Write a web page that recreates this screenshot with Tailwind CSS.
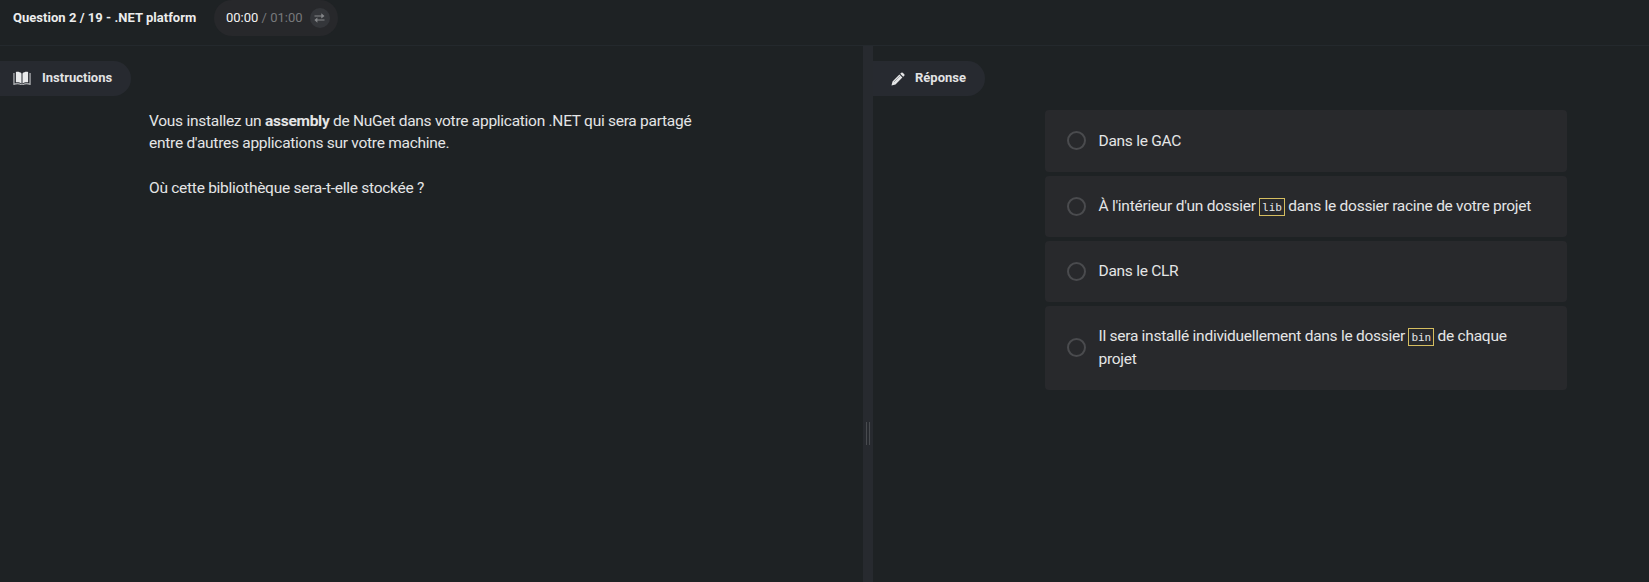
<!DOCTYPE html>
<html lang="fr">
<head>
<meta charset="utf-8">
<title>Question 2 / 19 - .NET platform</title>
<script src="https://cdn.jsdelivr.net/npm/@tailwindcss/browser@4"></script>
</head>
<body class="h-screen overflow-hidden bg-[#1e2224] font-[Roboto,sans-serif] text-[#e4e5e6]">
<div class="flex h-full flex-col">
  <header class="flex h-[46px] shrink-0 items-start border-b border-[#24292d] pl-[13px]">
    <h1 class="w-[201px] pt-[8px] text-[13px] leading-5 font-bold tracking-[0.03px] whitespace-nowrap text-[#eceded]">Question 2 / 19 - .NET platform</h1>
    <div class="flex h-9 w-[124px] items-center rounded-full bg-[#27282b] pl-3 text-[13px] whitespace-nowrap">
      <span class="text-[#f2f2f2]">00:00</span><span class="text-[#77797b]">&nbsp;/ 01:00</span>
      <span class="ml-[7px] flex size-5 items-center justify-center rounded-full bg-[#34363a]">
        <svg class="h-[10px] w-[11px]" viewBox="0 0 11 10" fill="none" stroke="#85878a" stroke-width="1.1"><path d="M0.5 3H9M2 7H10.5"/><path d="M7.3 0.3L10.5 3L7.3 5.4ZM3.4 4.6L0.4 7L3.4 9.7Z" fill="#85878a" stroke="none"/></svg>
      </span>
    </div>
  </header>
  <main class="flex min-h-0 flex-1">
    <section class="w-[863px] pt-[15px]">
      <div class="flex h-[35px] w-[131px] items-center rounded-r-full bg-[#272a30] pl-[13px]">
        <svg class="h-[15px] w-[18px]" viewBox="0 0 18 15"><path d="M8.5 2.4C7 1 5 .6 2.9 1V11.3C5 11 7 11.4 8.5 12.7ZM9.5 2.4C11 1 13 .6 15.1 1V11.3C13 11 11 11.4 9.5 12.7Z" fill="#e9eaeb"/><path d="M1.5 2H.4V14C3.6 12.9 6 13 8 14H10C12 13 14.4 12.9 17.6 14V2H16.5V12.4C13.6 11.9 11 12.2 9 13.5C7 12.2 4.4 11.9 1.5 12.4Z" fill="#c3c5c7"/></svg>
        <h2 class="ml-[11px] pb-[2px] text-[13px] font-bold text-[#e2e3e4]">Instructions</h2>
      </div>
      <div class="mt-[14px] ml-[149px] w-[565px] text-[15.5px] leading-[22.4px] tracking-[-0.27px]">
        <p>Vous installez un <strong>assembly</strong> de NuGet dans votre application .NET qui sera partagé entre d'autres applications sur votre machine.</p>
        <p class="mt-[22.4px]">Où cette bibliothèque sera-t-elle stockée ?</p>
      </div>
    </section>
    <div class="flex w-[10px] shrink-0 justify-center bg-[#272a2f] pt-[376px]">
      <div class="h-[23px] w-1 border-x border-[#484b4f]"></div>
    </div>
    <section class="flex-1 pt-[15px]">
      <div class="flex h-[35px] w-[112px] items-center rounded-r-full bg-[#272a30] pl-[18px]">
        <svg class="size-[14px]" viewBox="0 0 14 14" fill="#e4e5e6"><path d="M.5 13.5L1.5 9.5L8.4 2.6L11.4 5.6L4.5 12.5ZM9.2 1.8L10.3 .7Q11 .1 11.7 .7L13.3 2.3Q13.9 3 13.3 3.7L12.2 4.8Z"/><path d="M3 10L9 4" stroke="#777a80" stroke-width=".6"/></svg>
        <h2 class="ml-[10px] pb-[2px] text-[13px] font-bold text-[#e2e3e4]">Réponse</h2>
      </div>
      <ul class="mt-[14.4px] ml-[172px] flex w-[522px] flex-col gap-1 text-[15.5px] leading-[22.4px] tracking-[-0.27px]">
        <li class="flex items-center rounded bg-[#28292c] px-[21.5px] py-[19.4px]"><span class="mr-[13px] size-[19px] shrink-0 rounded-full border-2 border-[#4a4b4e]"></span><p>Dans le GAC</p></li>
        <li class="flex items-center rounded bg-[#28292c] px-[21.5px] py-[19.4px]"><span class="mr-[13px] size-[19px] shrink-0 rounded-full border-2 border-[#4a4b4e]"></span><p class="whitespace-nowrap">À l'intérieur d'un dossier <code class="border border-[#d5bd60] px-[2px] pt-[2px] pb-px font-['DejaVu_Sans_Mono',monospace] text-[11px] leading-none tracking-[-0.1px]">lib</code> dans le dossier racine de votre projet</p></li>
        <li class="flex items-center rounded bg-[#28292c] px-[21.5px] py-[19.4px]"><span class="mr-[13px] size-[19px] shrink-0 rounded-full border-2 border-[#4a4b4e]"></span><p>Dans le CLR</p></li>
        <li class="flex items-center rounded bg-[#28292c] px-[21.5px] py-[19.4px]"><span class="mr-[13px] size-[19px] shrink-0 rounded-full border-2 border-[#4a4b4e]"></span><p>Il sera installé individuellement dans le dossier <code class="border border-[#d5bd60] px-[2px] pt-[2px] pb-px font-['DejaVu_Sans_Mono',monospace] text-[11px] leading-none tracking-[-0.1px]">bin</code> de chaque projet</p></li>
      </ul>
    </section>
  </main>
</div>
</body>
</html>
